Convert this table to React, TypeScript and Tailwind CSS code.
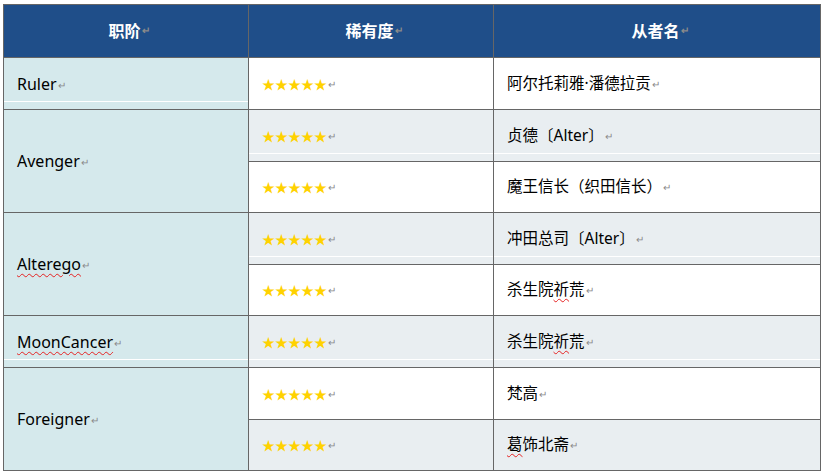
import React from "react";

type Row = {
    name: React.ReactNode;
    bg: "white" | "gray";
    line: boolean;
};

type Group = {
    cls: React.ReactNode;
    line: boolean;
    rows: Row[];
};

const Mark = () => <span className="ml-px text-[10px] text-[#8a8a8a] relative -top-px">↵</span>;

const Squiggle = ({ children }: { children: React.ReactNode }) => (
    <span className="underline decoration-wavy decoration-[#e52222] decoration-1 underline-offset-[3px]">{children}</span>
);

const groups: Group[] = [
    {
        cls: "Ruler",
        line: true,
        rows: [{ name: "阿尔托莉雅·潘德拉贡", bg: "white", line: false }],
    },
    {
        cls: "Avenger",
        line: false,
        rows: [
            { name: "贞德〔Alter〕", bg: "gray", line: true },
            { name: "魔王信长（织田信长）", bg: "white", line: false },
        ],
    },
    {
        cls: <Squiggle>Alterego</Squiggle>,
        line: false,
        rows: [
            { name: "冲田总司〔Alter〕", bg: "gray", line: true },
            { name: <>杀生院<Squiggle>祈</Squiggle>荒</>, bg: "white", line: false },
        ],
    },
    {
        cls: <Squiggle>MoonCancer</Squiggle>,
        line: true,
        rows: [{ name: <>杀生院<Squiggle>祈</Squiggle>荒</>, bg: "gray", line: true }],
    },
    {
        cls: "Foreigner",
        line: false,
        rows: [
            { name: "梵高", bg: "white", line: false },
            { name: <><Squiggle>葛</Squiggle>饰北斋</>, bg: "gray", line: false },
        ],
    },
];

function Cell({ children, bg, line, span }: { children: React.ReactNode; bg: string; line: boolean; span?: boolean }) {
    return (
        <div className={`relative flex items-center pl-[13px] ${bg} ${span ? "row-span-2" : ""}`}>
            <div className="leading-none">{children}</div>
            {line && <div className="absolute left-0 right-0 bottom-[7px] h-px bg-white" />}
        </div>
    );
}

export default function App() {
    return (
        <div
            className="w-[823px] h-[474px] bg-white pt-[4px] pl-[3px]"
            style={{ fontFamily: '"Noto Sans", "Noto Sans CJK SC", sans-serif' }}
        >
            <div className="grid w-[818px] grid-cols-[244px_244px_326px] grid-rows-[52px_51px_51px_50px_51px_50px_51px_51px_50px] gap-px bg-[#666666] p-px text-[15.5px] text-black">
                {["职阶", "稀有度", "从者名"].map((h) => (
                    <div key={h} className="flex items-center justify-center bg-[#1f4e89] font-bold text-white text-[16px] pl-[6px]">
                        <span>{h}</span>
                        <Mark />
                    </div>
                ))}
                {groups.map((g, gi) =>
                    g.rows.map((r, ri) => (
                        <React.Fragment key={`${gi}-${ri}`}>
                            {ri === 0 && (
                                <Cell bg="bg-[#d5e9ec] text-[16px]" line={g.line} span={g.rows.length > 1}>
                                    {g.cls}
                                    <Mark />
                                </Cell>
                            )}
                            <Cell bg={r.bg === "gray" ? "bg-[#e9eef1]" : "bg-white"} line={r.line}>
                                <span className="text-[13px] text-[#ffd200]">★★★★★</span>
                                <Mark />
                            </Cell>
                            <Cell bg={r.bg === "gray" ? "bg-[#e9eef1]" : "bg-white"} line={r.line}>
                                {r.name}
                                <Mark />
                            </Cell>
                        </React.Fragment>
                    ))
                )}
            </div>
        </div>
    );
}
